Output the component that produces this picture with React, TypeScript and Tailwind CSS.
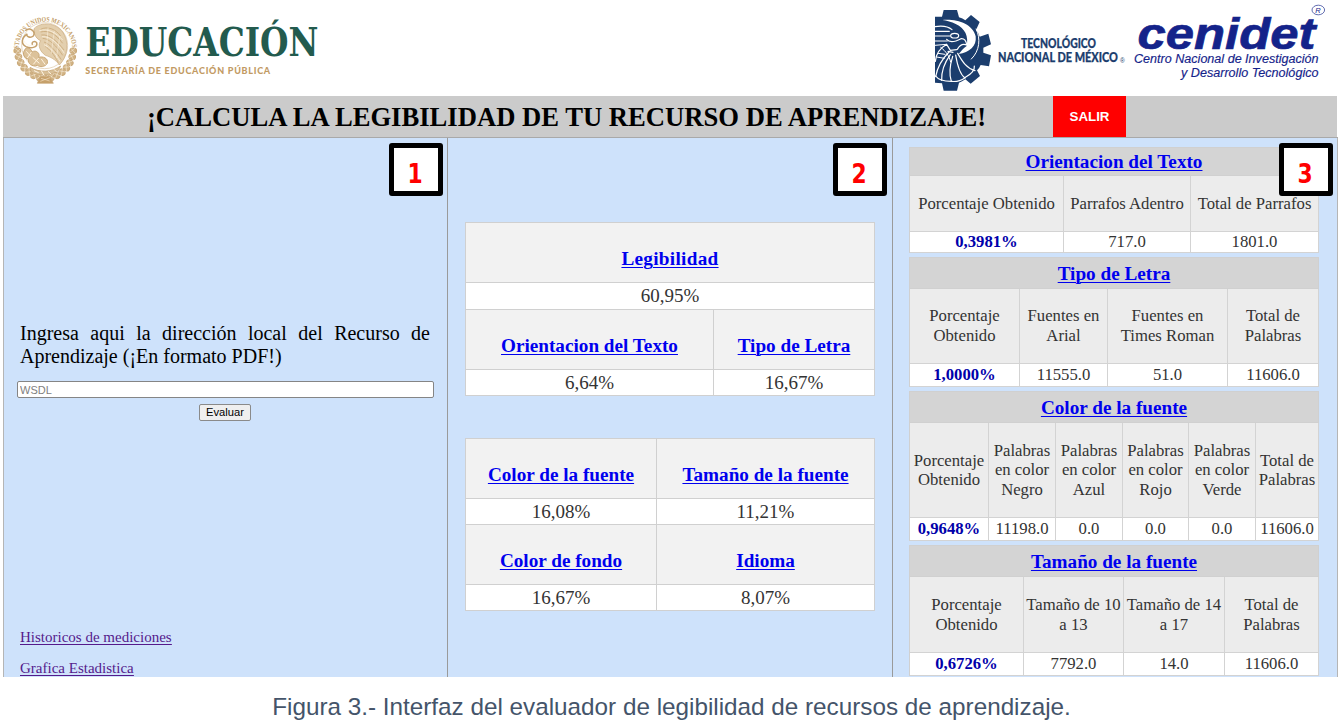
import React from "react";

const SERIF = "font-['Liberation_Serif','Times_New_Roman',serif]";
const SANS = "font-['Liberation_Sans',Arial,sans-serif]";

function MexicoSeal() {
  const petals = Array.from({ length: 15 }, (_, i) => {
    const a = ((4 + i * 12.3) * Math.PI) / 180;
    return { x: 112 + 84 * Math.cos(a), y: 122 + 88 * Math.sin(a), r: 4 + i * 12.3 };
  });
  return (
    <svg width="76" height="84" viewBox="0 0 228 252" className="shrink-0" fill="none" stroke="#c9a878">
      <defs>
        <path id="sealArc" d="M32 134 A81 84 0 1 1 193 134" />
      </defs>
      <text fontSize="21" fill="#c39d66" stroke="none" fontWeight="700" fontFamily="'Liberation Serif', serif">
        <textPath href="#sealArc" textLength="262" lengthAdjust="spacingAndGlyphs">ESTADOS UNIDOS MEXICANOS</textPath>
      </text>
      <circle cx="110" cy="113" r="69" stroke="#dcc6a3" strokeWidth="2" />
      <g strokeWidth="3" fill="#d1b384">
        {petals.map((p, i) => (
          <g key={i} transform={`translate(${p.x} ${p.y}) rotate(${p.r})`}>
            <ellipse rx="10" ry="8" />
            <path d="M-8 -7 L7 8 M-9 5 L5 -8" stroke="#fff8ec" strokeWidth="1.3" />
          </g>
        ))}
      </g>
      <path d="M78 62 C98 40 144 44 164 72 C184 100 180 146 154 171 C144 155 126 146 112 142 C96 130 88 112 98 98 C88 94 76 82 78 62Z" fill="#e3cfae" strokeWidth="2" />
      <g strokeWidth="2.4">
        <path d="M98 64 C118 54 142 62 158 84" />
        <path d="M98 72 C120 66 142 76 164 106" />
        <path d="M100 81 C124 78 146 98 168 126" />
        <path d="M104 91 C124 92 146 114 164 142" />
        <path d="M108 102 C126 108 142 128 160 155" />
        <path d="M112 116 C124 122 138 140 151 164" />
      </g>
      <g stroke="#fff7e8" strokeWidth="2">
        <path d="M94 68 C120 60 144 74 164 96" />
        <path d="M102 86 C128 84 150 106 169 136" />
        <path d="M108 110 C128 118 143 138 156 160" />
        <path d="M120 58 L116 118 M139 68 L130 136 M156 84 L145 150" strokeWidth="1.4" />
      </g>
      <path d="M52 68 C66 56 84 70 76 84 C66 92 52 84 58 78 C40 88 38 108 54 116 C72 124 90 116 86 104 C80 96 68 104 74 110" stroke="#c5a06b" strokeWidth="4.5" />
      <path d="M56 70 C68 62 76 74 70 80 M48 98 C52 112 74 118 82 108" stroke="#fff1d8" strokeWidth="1.8" />
      <path d="M50 126 C54 114 70 120 72 132 C84 124 98 136 92 148 C104 144 122 150 118 166 C110 178 96 178 88 172 C72 178 58 166 62 154 C48 152 42 136 50 126Z" fill="#dcc29a" strokeWidth="2.6" stroke="#c5a06b" />
      <path d="M55 130 L68 145 M70 132 L58 150 M74 148 L94 166 M92 150 L76 169 M100 153 L112 170" stroke="#fff3df" strokeWidth="3" />
      <path d="M66 178 C94 194 130 194 158 174 L150 188 C130 204 90 204 70 192Z" fill="#d8bf97" strokeWidth="2.5" />
      <path d="M78 188 L92 194 M100 188 L108 202 M120 190 L130 199 M138 184 L146 192" stroke="#fff5e4" strokeWidth="3" />
      <path d="M96 206 L126 206 L136 226 L88 226Z" fill="#c6a06a" strokeWidth="2" />
      <path d="M99 211 L125 219 M97 220 L126 209" stroke="#fff2dc" strokeWidth="1.5" />
    </svg>
  );
}

function TecGear() {
  return (
    <svg width="66" height="90" viewBox="0 0 198 270" className="shrink-0">
      <path
        d="M15 38 L36 38 L41 18 H81 L87 40 Q98 43 106 49 L123 33 L149 54 L138 78 Q147 88 149 98 L175 89 L183 121 L160 131 V146 L183 154 L177 187 L152 183 Q148 193 141 199 L150 216 L122 239 L106 226 Q96 233 87 236 L81 260 H41 L36 238 L15 236Z"
        fill="#1b3d6d"
      />
      <g fill="none" stroke="#fff" strokeWidth="3.6" strokeLinecap="round">
        <path d="M15 68 C34 65 52 65 66 77" />
        <path d="M15 82 H58" />
        <path d="M15 96 H60 M15 111 H52 M15 124 L49 121" strokeWidth="3" />
        <ellipse cx="74" cy="95" rx="12" ry="7" />
        <path d="M50 106 C60 118 78 112 93 104 C103 103 109 111 110 123 C98 118 90 122 82 136" />
        <path d="M16 172 C18 148 31 132 50 121 M50 121 L61 139 L80 137 M54 142 L69 145" />
        <path d="M32 130 C48 142 58 156 62 174 M24 148 L45 151 M20 159 L43 163" strokeWidth="3" />
        <path d="M57 144 C35 166 22 190 17 218" />
        <path d="M61 152 C45 174 34 204 35 229" />
        <path d="M68 157 C59 186 58 214 64 232" />
        <path d="M77 153 C82 184 91 212 105 222" />
        <path d="M83 148 C98 174 110 193 135 200" />
        <path d="M17 216 C27 231 52 232 64 232 C79 234 94 229 105 221" />
        <path d="M104 221 C123 211 135 200 133 186" />
      </g>
      <path d="M37 48 C80 44 128 59 137 97 C141 126 118 146 86 150 C93 142 100 132 110 126 C116 98 106 73 77 60 C65 54 50 50 37 48Z" fill="#fff" />
      <path d="M138 74 C152 103 150 140 123 166" fill="none" stroke="#fff" strokeWidth="3" />
    </svg>
  );
}

function Header() {
  return (
    <header className="flex h-24 shrink-0 items-start justify-between bg-white">
      <div className="flex pl-2 pt-2">
        <MexicoSeal />
        <svg width="340" height="80" viewBox="0 0 340 80" className="overflow-visible">
          <text x="1.5" y="48" fontFamily="'DejaVu Serif', serif" fontWeight="700" fontSize="38.5" fill="#235b4e" textLength="233" lengthAdjust="spacingAndGlyphs">EDUCACIÓN</text>
          <text x="1.2" y="65.5" fontFamily="Lato, sans-serif" fontWeight="900" fontSize="9" fill="#c29a63" textLength="185" lengthAdjust="spacing">SECRETARÍA DE EDUCACIÓN PÚBLICA</text>
        </svg>
      </div>
      <div className="flex">
        <div className="pt-1">
          <TecGear />
        </div>
        <svg width="347" height="94" viewBox="0 0 347 94">
          <g fontFamily="Lato, sans-serif" fontWeight="900" fill="#1b3d6d" stroke="#1b3d6d" strokeWidth="0.25">
            <text x="25" y="47.5" fontSize="13" textLength="75" lengthAdjust="spacingAndGlyphs">TECNOLÓGICO</text>
            <text x="2" y="62" fontSize="13" textLength="120" lengthAdjust="spacingAndGlyphs">NACIONAL DE MÉXICO</text>
          </g>
          <text x="124" y="62.5" fontSize="6.5" fontFamily="'Liberation Sans', sans-serif" fill="#1b3d6d">®</text>
          <g fontFamily="'Liberation Sans', sans-serif" fontStyle="italic" fill="#14238a">
            <text x="141.5" y="48.7" fontSize="44" fontWeight="700" stroke="#14238a" strokeWidth="0.7" textLength="178" lengthAdjust="spacingAndGlyphs">cenidet</text>
            <text x="138" y="63" fontSize="12" stroke="#14238a" strokeWidth="0.15" textLength="184.5" lengthAdjust="spacingAndGlyphs">Centro Nacional de Investigación</text>
            <text x="185" y="76.5" fontSize="12" stroke="#14238a" strokeWidth="0.15" textLength="137.5" lengthAdjust="spacingAndGlyphs">y Desarrollo Tecnológico</text>
            <ellipse cx="322.3" cy="10" rx="6.3" ry="4.8" fill="none" stroke="#3a479c" strokeWidth="0.8" />
            <text x="319.3" y="12.7" fontSize="7.5">R</text>
          </g>
        </svg>
      </div>
    </header>
  );
}

function Badge({ n, place }: { n: number; place: string }) {
  return (
    <div className={`absolute top-[5px] flex h-[53px] w-[54px] items-center justify-center rounded-[3px] border-[5px] border-black bg-white ${place}`}>
      <span className="translate-x-[-1px] translate-y-[4px] scale-x-[.84] font-['DejaVu_Sans',sans-serif] text-[26px] leading-none font-bold text-[#ff0000]">
        {n}
      </span>
    </div>
  );
}

function TitleLink({ children, spacing = "" }: { children: React.ReactNode; spacing?: string }) {
  return (
    <a href="#" className={`text-[19.2px] leading-none font-bold whitespace-nowrap text-[#0000ee] underline decoration-1 underline-offset-2 ${spacing}`}>
      {children}
    </a>
  );
}

function Score({ title, value, height, spacing }: { title: string; value: string; height: string; spacing?: string }) {
  return (
    <div className="flex flex-col border-r border-[#d0d0d0]">
      <div className="flex h-[60px] items-center justify-center border-b border-[#d0d0d0] bg-[#f2f2f2] pt-[13px]">
        <TitleLink spacing={spacing}>{title}</TitleLink>
      </div>
      <div className={`flex items-center justify-center border-b border-[#d0d0d0] bg-white pb-px text-[19px] leading-none text-[#333] ${height}`}>
        {value}
      </div>
    </div>
  );
}

type DetailProps = {
  title: string;
  titleHeight: string;
  headHeight: string;
  valueHeight: string;
  columns: string;
  data: { head: string[]; value: string }[];
};

function Detail({ title, titleHeight, headHeight, valueHeight, columns, data }: DetailProps) {
  return (
    <section className="w-[410px] border-t border-l border-[#d0d0d0]">
      <div className={`flex items-center justify-center border-r border-b border-[#d0d0d0] bg-[#d4d4d4] ${titleHeight}`}>
        <TitleLink>{title}</TitleLink>
      </div>
      <div className={`grid ${columns}`}>
        {data.map((d, i) => (
          <div key={i} className="border-r border-[#d3d3d3] text-center text-[16.7px] leading-[19.2px] whitespace-nowrap text-[#333]">
            <div className={`flex flex-col items-center justify-center border-b border-[#d3d3d3] bg-[#ececec] ${headHeight}`}>
              {d.head.map((line) => (
                <span key={line}>{line}</span>
              ))}
            </div>
            <div className={`flex items-center justify-center border-b border-[#d3d3d3] bg-white ${valueHeight} ${i === 0 ? "font-bold text-[#0000aa]" : ""}`}>
              {d.value}
            </div>
          </div>
        ))}
      </div>
    </section>
  );
}

const details: DetailProps[] = [
  {
    title: "Orientacion del Texto",
    titleHeight: "h-[28px]",
    headHeight: "h-[56px]",
    valueHeight: "h-[21px]",
    columns: "grid-cols-[154px_127px_128px]",
    data: [
      { head: ["Porcentaje Obtenido"], value: "0,3981%" },
      { head: ["Parrafos Adentro"], value: "717.0" },
      { head: ["Total de Parrafos"], value: "1801.0" },
    ],
  },
  {
    title: "Tipo de Letra",
    titleHeight: "h-[31px] pt-px",
    headHeight: "h-[75px] pb-px",
    valueHeight: "h-[23px]",
    columns: "grid-cols-[110px_88px_120px_91px]",
    data: [
      { head: ["Porcentaje", "Obtenido"], value: "1,0000%" },
      { head: ["Fuentes en", "Arial"], value: "11555.0" },
      { head: ["Fuentes en", "Times Roman"], value: "51.0" },
      { head: ["Total de", "Palabras"], value: "11606.0" },
    ],
  },
  {
    title: "Color de la fuente",
    titleHeight: "h-[31px] pt-px",
    headHeight: "h-[95px]",
    valueHeight: "h-[23px]",
    columns: "grid-cols-[79px_67px_67px_66px_67px_63px]",
    data: [
      { head: ["Porcentaje", "Obtenido"], value: "0,9648%" },
      { head: ["Palabras", "en color", "Negro"], value: "11198.0" },
      { head: ["Palabras", "en color", "Azul"], value: "0.0" },
      { head: ["Palabras", "en color", "Rojo"], value: "0.0" },
      { head: ["Palabras", "en color", "Verde"], value: "0.0" },
      { head: ["Total de", "Palabras"], value: "11606.0" },
    ],
  },
  {
    title: "Tamaño de la fuente",
    titleHeight: "h-[31px] pt-px",
    headHeight: "h-[76px]",
    valueHeight: "h-[23px]",
    columns: "grid-cols-[114px_100px_101px_94px]",
    data: [
      { head: ["Porcentaje", "Obtenido"], value: "0,6726%" },
      { head: ["Tamaño de 10", "a 13"], value: "7792.0" },
      { head: ["Tamaño de 14", "a 17"], value: "14.0" },
      { head: ["Total de", "Palabras"], value: "11606.0" },
    ],
  },
];

export default function App() {
  return (
    <div className={`flex h-[720px] w-[1343px] flex-col overflow-hidden bg-white ${SERIF}`}>
      <Header />

      <div className="mx-[3px] flex h-[41px] w-[1334px] shrink-0 bg-[#cbcbcb]">
        <h1 className="w-[1050px] pl-[144px] text-[26.63px] leading-[42px] font-bold whitespace-nowrap text-black">
          ¡CALCULA LA LEGIBILIDAD DE TU RECURSO DE APRENDIZAJE!
        </h1>
        <button className={`w-[73px] bg-[#ff0000] text-[13.33px] font-bold text-white ${SANS}`}>SALIR</button>
      </div>

      <main className="mx-[3px] grid h-[540px] w-[1335px] shrink-0 grid-cols-[445px_445px_445px] overflow-hidden border-t border-[#a9a9a9] bg-[#cee2fb]">
        <div className="relative flex flex-col border-r border-l border-r-[#9a9a9a] border-l-[#b5b5b5] pt-[184px]">
          <p className="ml-4 w-[410px] text-justify text-[20px] leading-[23px] text-black">
            Ingresa aqui la dirección local del Recurso de Aprendizaje (¡En formato PDF!)
          </p>
          <input
            placeholder="WSDL"
            className={`mt-[13px] ml-[13px] h-[17px] w-[417px] shrink-0 rounded-[2px] border border-[#858585] bg-white px-[2px] text-[11px] leading-none placeholder:text-[#808080] ${SANS}`}
          />
          <button className={`mt-[6px] ml-[195px] h-[17px] w-[52px] shrink-0 rounded-[2px] border border-[#8a8a8a] bg-[#efefef] text-[11.2px] leading-none text-black ${SANS}`}>
            Evaluar
          </button>
          <nav className="mt-[208px] ml-4 flex flex-col items-start gap-[14px] text-[15px] leading-[17px] text-[#551a8b] underline decoration-1 underline-offset-2">
            <a href="#">Historicos de mediciones</a>
            <a href="#">Grafica Estadistica</a>
          </nav>
          <Badge n={1} place="right-1" />
        </div>

        <div className="relative border-r border-[#9a9a9a] pt-[84px] pl-[17px]">
          <div className="w-[410px] border-t border-l border-[#d0d0d0]">
            <Score title="Legibilidad" value="60,95%" height="h-[27px]" spacing="tracking-[0.3px]" />
            <div className="grid grid-cols-[248px_161px]">
              <Score title="Orientacion del Texto" value="6,64%" height="h-[26px]" />
              <Score title="Tipo de Letra" value="16,67%" height="h-[26px]" />
            </div>
          </div>
          <div className="mt-[42px] grid w-[410px] grid-cols-[191px_218px] border-t border-l border-[#d0d0d0]">
            <Score title="Color de la fuente" value="16,08%" height="h-[26px]" />
            <Score title="Tamaño de la fuente" value="11,21%" height="h-[26px]" />
            <Score title="Color de fondo" value="16,67%" height="h-[26px]" />
            <Score title="Idioma" value="8,07%" height="h-[26px]" />
          </div>
          <Badge n={2} place="right-[5px]" />
        </div>

        <div className="relative flex flex-col gap-1 border-r border-[#b5b5b5] pt-[9px] pl-4">
          {details.map((d) => (
            <Detail key={d.title} {...d} />
          ))}
          <Badge n={3} place="right-1" />
        </div>
      </main>

      <p className={`pt-[16px] text-center text-[24.28px] leading-[28px] whitespace-nowrap text-[#44546a] ${SANS}`}>
        Figura 3.- Interfaz del evaluador de legibilidad de recursos de aprendizaje.
      </p>
    </div>
  );
}
